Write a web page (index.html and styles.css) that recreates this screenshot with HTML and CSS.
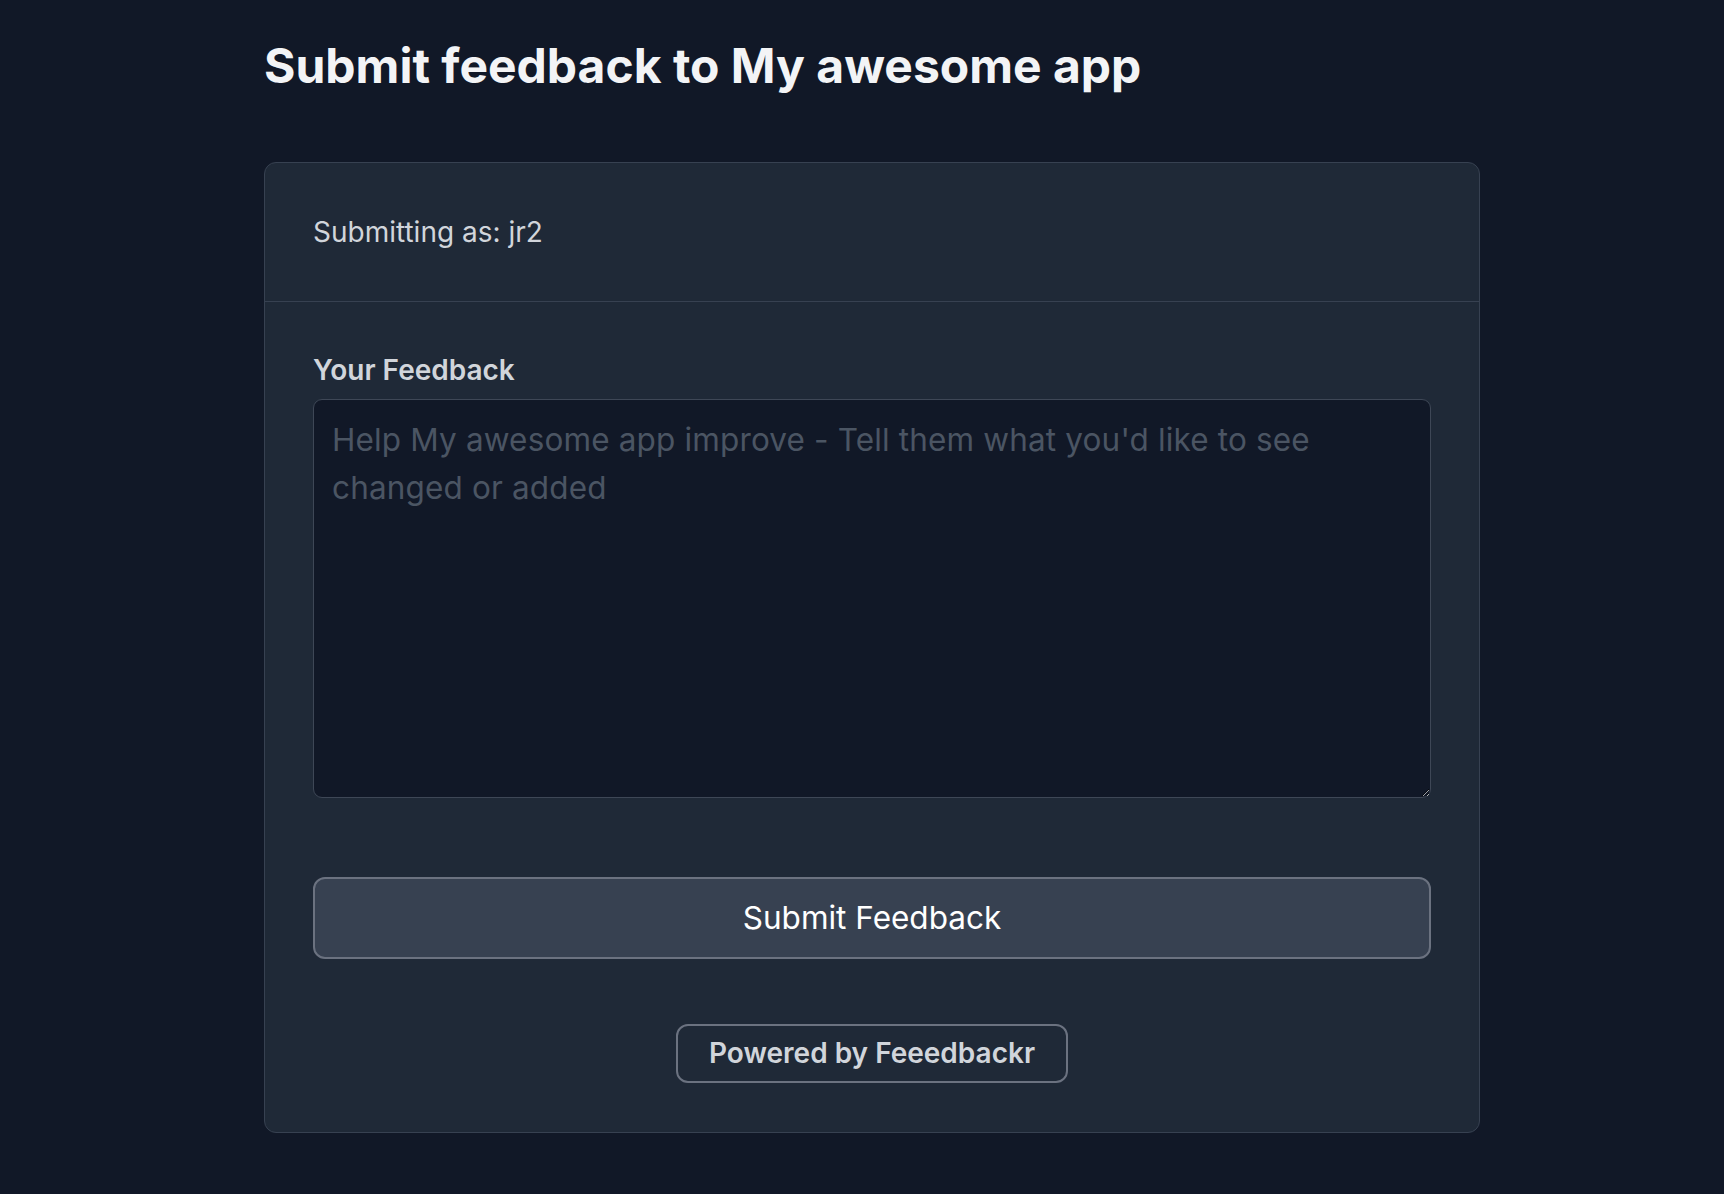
FILE: index.html
```html
<!DOCTYPE html>
<html lang="en">
<head>
  <meta charset="UTF-8" />
  <meta name="viewport" content="width=device-width, initial-scale=1.0"/>
  <title>Submit feedback to My awesome app</title>
  <link rel="stylesheet" href="styles.css">
</head>
<body>
  <main class="page">
    <h1 class="page-title">Submit feedback to My awesome app</h1>

    <div class="card">
      <div class="card-header">
        <p class="submitter">Submitting as: jr2</p>
      </div>

      <form class="card-body" onsubmit="return false;">
        <label for="feedback" class="field-label">Your Feedback</label>
        <textarea id="feedback" class="feedback-input" placeholder="Help My awesome app improve - Tell them what you'd like to see changed or added"></textarea>

        <button type="submit" class="submit-button">Submit Feedback</button>

        <div class="powered">
          <a href="#" class="powered-link">Powered by Feeedbackr</a>
        </div>
      </form>
    </div>
  </main>
</body>
</html>
```

FILE: styles.css
```css
:root {
  --bg-color: #111827;
  --card-bg: #1f2937;
  --card-border: #374151;
  --input-bg: #111827;
  --input-border: #3e4756;
  --button-bg: #374151;
  --button-border: #6b7280;
  --title-color: #f3f4f6;
  --text-color: #d1d5db;
  --placeholder: #4b5563;
}

* {
  box-sizing: border-box;
}

body {
  margin: 0;
  background: var(--bg-color);
  color: var(--text-color);
  font-family: 'Inter', 'Noto Sans', sans-serif;
}

.page {
  width: 1216px;
  margin-left: 264px;
  padding-top: 36px;
  padding-bottom: 62px;
}

.page-title {
  margin: 0 0 66px;
  font-size: 48px;
  line-height: 60px;
  font-weight: 700;
  color: var(--title-color);
}

.card {
  background: var(--card-bg);
  border: 1px solid var(--card-border);
  border-radius: 12px;
}

.card-header {
  padding: 48px;
  border-bottom: 1px solid var(--card-border);
}

.submitter {
  margin: 0;
  font-size: 28px;
  line-height: 42px;
  color: var(--text-color);
}

.card-body {
  display: flex;
  flex-direction: column;
  padding: 48px 48px 49px;
}

.field-label {
  font-size: 28px;
  line-height: 40px;
  font-weight: 600;
  color: var(--text-color);
  margin-bottom: 9px;
}

.feedback-input {
  width: 100%;
  height: 399px;
  padding: 16px 18px;
  background: var(--input-bg);
  color: var(--text-color);
  border: 1px solid var(--input-border);
  border-radius: 9px;
  font-family: inherit;
  font-size: 31.5px;
  line-height: 48px;
  letter-spacing: 0.15px;
  resize: vertical;
}

.feedback-input::placeholder {
  color: var(--placeholder);
}

.submit-button {
  margin-top: 79px;
  height: 82px;
  padding-bottom: 3px;
  background: var(--button-bg);
  color: #ffffff;
  border: 2px solid var(--button-border);
  border-radius: 12px;
  font-family: inherit;
  font-size: 31.5px;
  font-weight: 400;
  cursor: pointer;
}

.submit-button:hover {
  background: #4b5563;
}

.powered {
  display: flex;
  justify-content: center;
  margin-top: 65px;
}

.powered-link {
  display: inline-block;
  height: 59px;
  padding: 0 31px;
  border: 2px solid var(--button-border);
  border-radius: 12px;
  font-size: 28px;
  line-height: 55px;
  font-weight: 600;
  color: var(--text-color);
  text-decoration: none;
}
```
